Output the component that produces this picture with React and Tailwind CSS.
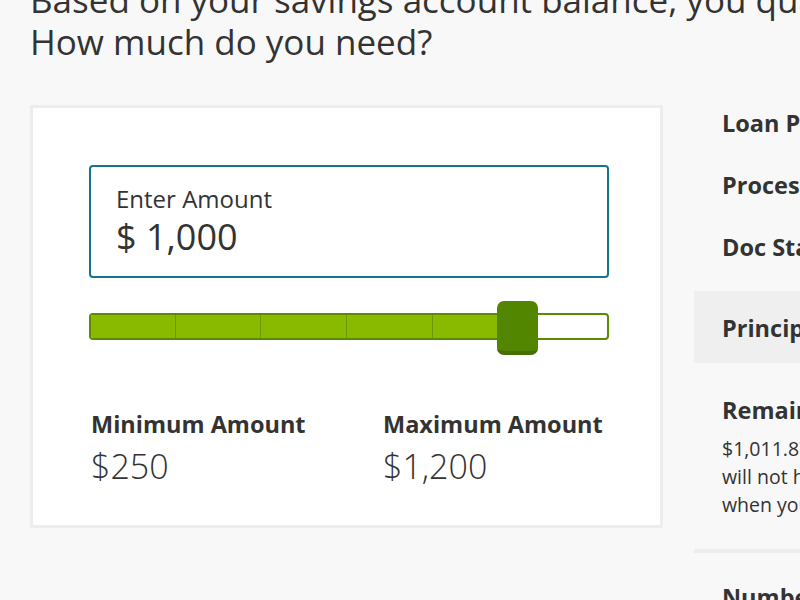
import React from 'react'

const font = { fontFamily: '"Open Sans", "Liberation Sans", sans-serif' }

function Slider({ percent }) {
  const ticks = [84, 169, 255, 341]
  return (
    <div className="relative h-[54px] w-[520px] mt-[23px]">
      <div className="absolute left-0 right-0 top-[12px] h-[27px] rounded-[4px] border-2 border-[#5b8c00] bg-white overflow-hidden">
        <div className="h-full bg-[#8aba00]" style={{ width: `${percent}%` }} />
        {ticks.map((t) => (
          <div key={t} className="absolute top-0 bottom-0 w-px bg-[#6a9a00]" style={{ left: t }} />
        ))}
      </div>
      <div
        className="absolute top-0 w-[41px] h-[54px] rounded-[7px] bg-[#528500] border-b-[4px] border-[#457000]"
        style={{ left: `calc(${percent}% - 18px)` }}
      />
    </div>
  )
}

function Row({ label, shaded }) {
  return (
    <div className={`flex items-center pl-[28px] ${shaded ? 'bg-[#efefef] h-[72px] pt-[3px]' : 'h-[62px]'}`}>
      <span className="text-[23.5px] font-bold text-[#333] whitespace-nowrap">{label}</span>
    </div>
  )
}

export default function App() {
  return (
    <div className="w-[800px] h-[600px] overflow-hidden bg-[#f8f8f8] text-[#333]" style={font}>
      <div className="pl-[30px]">
        <h1 className="mt-[-21px] text-[35px] leading-[42px] font-normal whitespace-nowrap">
          Based on your savings account balance, you qualify for a personal loan.
          <br />
          How much do you need?
        </h1>

        <div className="flex mt-[42px] gap-[31px]">
          {/* Amount card */}
          <div className="w-[633px] h-[423px] shrink-0 border-[3px] border-[#ededed] bg-white pt-[57px] pl-[56px]">
            <div className="w-[520px] h-[113px] border-2 border-[#14768a] rounded-[4px] pl-[25px] pt-[17px]">
              <p className="text-[24px] leading-[30px]">Enter Amount</p>
              <p className="text-[36px] leading-[44px] mt-[1px]">$ 1,000</p>
            </div>

            <Slider percent={82} />

            <div className="grid grid-cols-[292px_1fr] mt-[55px] pl-[2px]">
              <div>
                <p className="text-[23.5px] leading-[28px] font-bold">Minimum Amount</p>
                <p className="text-[34px] leading-[44px] font-light mt-[6px]">$250</p>
              </div>
              <div>
                <p className="text-[23.5px] leading-[28px] font-bold">Maximum Amount</p>
                <p className="text-[34px] leading-[44px] font-light mt-[6px]">$1,200</p>
              </div>
            </div>
          </div>

          {/* Loan summary */}
          <div className="w-[320px] shrink-0 flex flex-col">
            <div className="mt-[-12px]">
              <Row label="Loan Purpose" />
              <Row label="Processing Fee" />
              <Row label="Doc Stamp Tax" />
            </div>
            <div className="mt-[12px]">
              <Row label="Principal Amount" shaded />
            </div>
            <div className="pl-[28px] pt-[33px] pb-[30px] border-b-4 border-[#ededed]">
              <p className="text-[23.5px] leading-[28px] font-bold whitespace-nowrap">Remaining Balance</p>
              <div className="mt-[11px] text-[19.5px] leading-[28px] whitespace-nowrap">
                <p>$1,011.87 of your savings</p>
                <p>will not have a hold placed</p>
                <p>when you take out this loan.</p>
              </div>
            </div>
            <div className="pl-[28px] pt-[30px]">
              <p className="text-[23.5px] leading-[28px] font-bold whitespace-nowrap">Number of Payments</p>
            </div>
          </div>
        </div>
      </div>
    </div>
  )
}
